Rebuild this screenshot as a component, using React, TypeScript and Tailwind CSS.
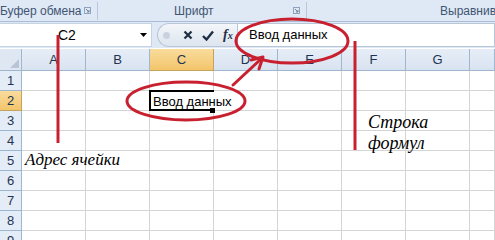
import React from 'react';

const columns = ['A', 'B', 'C', 'D', 'E', 'F', 'G', ''];
const rows = [1, 2, 3, 4, 5, 6, 7, 8, 9];

const Launcher: React.FC = () => (
  <svg width="7" height="7" viewBox="0 0 7 7" className="shrink-0">
    <rect x="0.5" y="0.5" width="6" height="6" fill="none" stroke="#8fa3bd" />
    <path d="M2 2 L5 5 M5 3 V5 H3" stroke="#6d819c" fill="none" />
  </svg>
);

const Annotations: React.FC = () => (
  <div className="pointer-events-none absolute inset-0">
    <svg width="495" height="240" className="absolute left-0 top-0">
      <g stroke="#c8202f" strokeWidth="3" fill="none" strokeLinecap="round">
        <ellipse cx="292" cy="41" rx="56" ry="22" />
        <ellipse cx="186" cy="101" rx="59" ry="19" />
        <line x1="58" y1="35" x2="58" y2="143" strokeLinecap="butt" />
        <line x1="355" y1="41" x2="355" y2="150" strokeLinecap="butt" />
        <line x1="233" y1="85" x2="261" y2="59" />
        <path d="M251 60 L263 57 L259 69" strokeLinejoin="round" />
      </g>
    </svg>
    <div className="absolute left-[25px] top-[150px] font-['Liberation_Serif',serif] text-[17px] italic leading-[20px] text-black">
      Адрес ячейки
    </div>
    <div className="absolute left-[368px] top-[112px] font-['Liberation_Serif',serif] text-[18px] italic leading-[21px] text-black">
      Строка
      <br />
      формул
    </div>
  </div>
);

const App: React.FC = () => {
  return (
    <div className="relative h-[240px] w-[495px] overflow-hidden bg-white font-['Liberation_Sans',sans-serif]">
      {/* Ribbon group labels */}
      <div className="flex h-[22px] items-center overflow-hidden whitespace-nowrap border-b border-[#a9bdd6] bg-[#dfe8f5] text-[12px] text-[#3f5673]">
        <div className="flex w-[98px] shrink-0 items-center justify-between border-r border-[#b7c8de] pr-[6px]">
          <span>Буфер обмена</span>
          <Launcher />
        </div>
        <div className="flex w-[209px] shrink-0 items-center border-r border-[#b7c8de] pr-[6px]">
          <span className="ml-[76px]">Шрифт</span>
          <span className="ml-auto">
            <Launcher />
          </span>
        </div>
        <span className="ml-[133px] shrink-0">Выравнивание</span>
      </div>

      {/* Formula bar */}
      <div className="flex h-[26px] items-stretch bg-[#dfe8f5] pb-[1px] pt-[1px]">
        <div className="flex w-[152px] shrink-0 items-center border-y border-r border-[#c5d3e4] bg-white pl-[58px] pr-[3px] text-[14px] text-black">
          <span>C2</span>
          <svg width="7" height="4" viewBox="0 0 7 4" className="ml-auto mr-[1px]">
            <path d="M0 0 H7 L3.5 4 Z" fill="#000" />
          </svg>
        </div>
        <div className="ml-[5px] flex w-[80px] shrink-0 items-center rounded-l-full border border-r-0 border-[#b8c6d8] bg-gradient-to-b from-[#f3f6fa] to-[#dde5ef]">
          <span className="ml-[5px] h-[7px] w-[7px] rounded-full bg-[#c9d2de]" />
          <svg width="10" height="10" viewBox="0 0 10 10" className="ml-[13px]">
            <path d="M1.5 1.5 L8.5 8.5 M8.5 1.5 L1.5 8.5" stroke="#1f2f45" strokeWidth="2.2" />
          </svg>
          <svg width="12" height="11" viewBox="0 0 12 11" className="ml-[9px]">
            <path d="M1 6 L4.5 9.5 L11 1.5" stroke="#1f2f45" strokeWidth="2.4" fill="none" />
          </svg>
          <span className="ml-[9px] font-['Liberation_Serif',serif] text-[14px] font-bold italic leading-none text-[#1f2f45]">
            f<span className="text-[10px]">x</span>
          </span>
        </div>
        <div className="flex flex-1 items-center border border-[#b8c6d8] bg-white pl-[11px] text-[13px] text-black">
          Ввод данных
        </div>
      </div>

      {/* Sheet grid */}
      <div className="mt-[1px] grid grid-cols-[22px_repeat(7,64px)_1fr] grid-rows-[22px_repeat(9,20px)] text-[13px]">
        <div className="relative border-b border-r border-[#9eb6ce] bg-[#dfe7f2]">
          <svg width="9" height="9" viewBox="0 0 9 9" className="absolute bottom-[2px] right-[2px]">
            <path d="M9 0 V9 H0 Z" fill="#b9c5d4" />
          </svg>
        </div>
        {columns.map((c, i) => (
          <div
            key={`h${i}`}
            className={
              c === 'C'
                ? 'flex items-center justify-center border-b border-r border-[#c4a35c] bg-gradient-to-b from-[#f9dc9c] to-[#f3c56b] text-[#1f3450]'
                : 'flex items-center justify-center border-b border-r border-[#9eb6ce] bg-gradient-to-b from-[#e6edf7] to-[#d9e3f0] text-[#1f3450]'
            }
          >
            {c}
          </div>
        ))}
        {rows.map((r) => (
          <React.Fragment key={r}>
            <div
              className={
                r === 2
                  ? 'flex items-center justify-center border-b border-r border-[#c4a35c] bg-gradient-to-b from-[#f9dc9c] to-[#f3c56b] text-[#1f3450]'
                  : 'flex items-center justify-center border-b border-r border-[#9eb6ce] bg-[#e4ecf7] text-[#1f3450]'
              }
            >
              {r}
            </div>
            {columns.map((c, i) =>
              r === 2 && c === 'C' ? (
                <div
                  key={`${r}${i}`}
                  className="relative -ml-[1px] -mt-[1px] border-y-2 border-l-2 border-black"
                >
                  <span className="absolute left-[2px] top-[0px] whitespace-nowrap text-black">
                    Ввод данных
                  </span>
                  <span className="absolute -bottom-[4px] right-[-1px] h-[5px] w-[5px] bg-black" />
                </div>
              ) : (
                <div key={`${r}${i}`} className="border-b border-r border-[#d4d4d4]" />
              )
            )}
          </React.Fragment>
        ))}
      </div>

      <Annotations />
    </div>
  );
};

export default App;
